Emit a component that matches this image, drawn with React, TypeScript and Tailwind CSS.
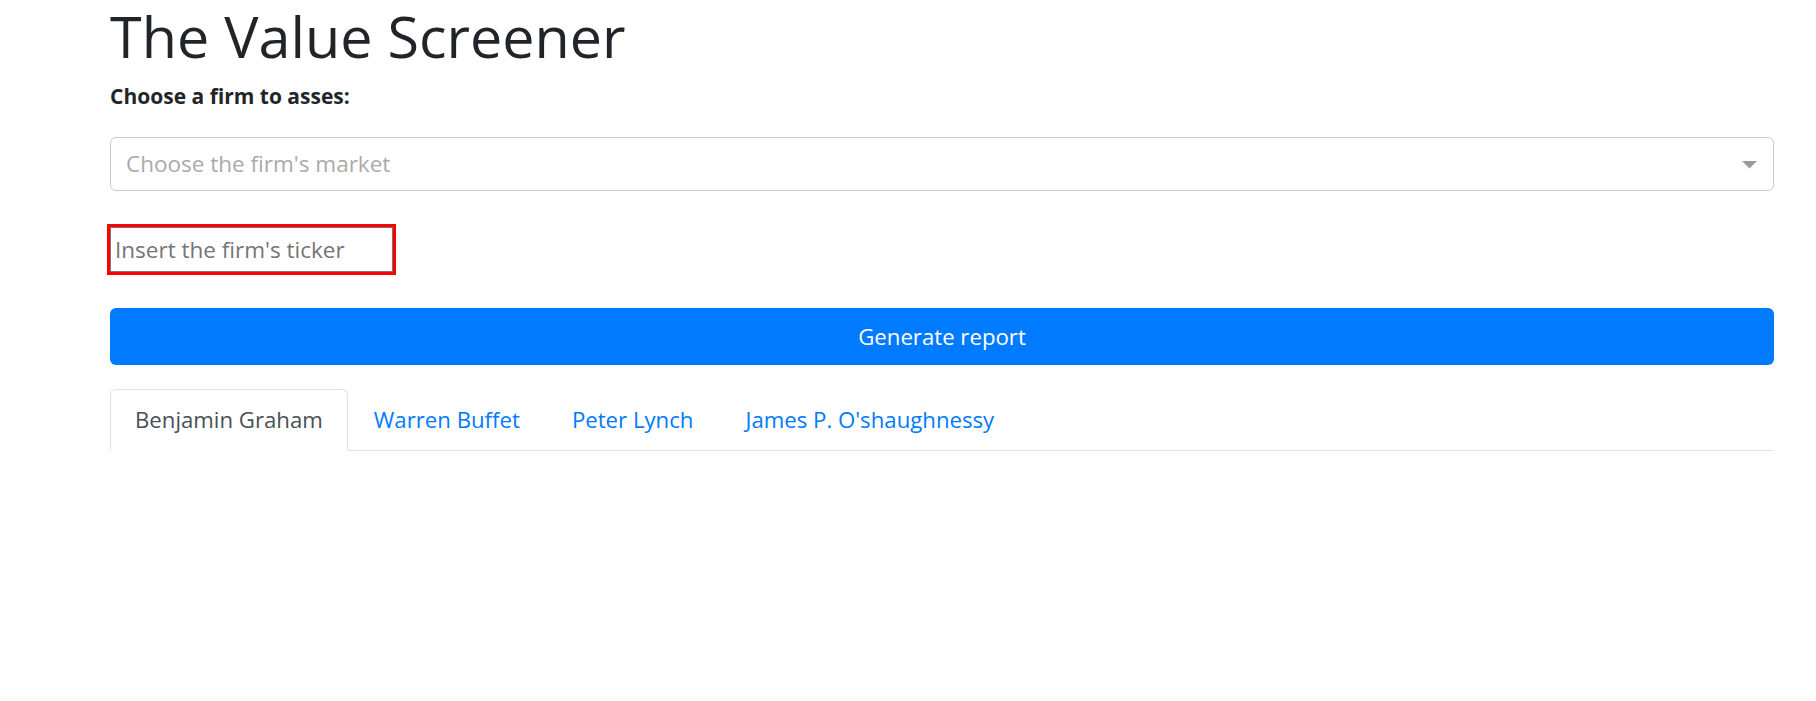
import { useState } from "react";

const tabs = [
  "Benjamin Graham",
  "Warren Buffet",
  "Peter Lynch",
  "James P. O'shaughnessy",
];

export default function App() {
  const [active, setActive] = useState(0);
  const [ticker, setTicker] = useState("");

  return (
    <div className="min-h-[701px] bg-white pl-[110px] pr-[42px] font-['Open_Sans',sans-serif] text-[#212529]">
      <h1 className="text-[57.5px] leading-[72px] font-medium mb-[9px]">
        The Value Screener
      </h1>
      <label className="block text-[21px] leading-[31px] font-bold">
        Choose a firm to asses:
      </label>

      {/* Market dropdown */}
      <div className="mt-[25px] h-[54px] border border-[#ccc] rounded-[6px] flex items-center justify-between pl-[15px] pr-[16px] cursor-pointer">
        <span className="text-[22.5px] text-[#aaa]">Choose the firm's market</span>
        <svg width="15" height="8" viewBox="0 0 15 8" className="mt-[1px]">
          <polygon points="0,0 15,0 7.5,7.5" fill="#999" />
        </svg>
      </div>

      {/* Ticker input */}
      <div className="mt-[36px]">
        <input
          value={ticker}
          onChange={(e) => setTicker(e.target.value)}
          placeholder="Insert the firm's ticker"
          className="w-[283px] h-[45px] border border-[#767676] pl-[4px] text-[22.5px] text-[#212529] placeholder:text-[#757575] shadow-[0_0_0_3px_#ff0000] outline-none"
        />
      </div>

      <button className="mt-[36px] w-full h-[57px] rounded-[6px] bg-[#007bff] text-white text-[22.2px]">
        Generate report
      </button>

      {/* Tabs */}
      <div className="mt-[24px] flex border-b border-[#dee2e6]">
        {tabs.map((t, i) => (
          <button
            key={t}
            onClick={() => setActive(i)}
            className={
              i === active
                ? "h-[62px] px-[24px] text-[22.2px] text-[#495057] bg-white border border-[#dee2e6] border-b-white rounded-t-[6px] mb-[-1px]"
                : "h-[62px] px-[25px] text-[22.2px] text-[#007bff] border border-transparent mb-[-1px]"
            }
          >
            {t}
          </button>
        ))}
      </div>
    </div>
  );
}
